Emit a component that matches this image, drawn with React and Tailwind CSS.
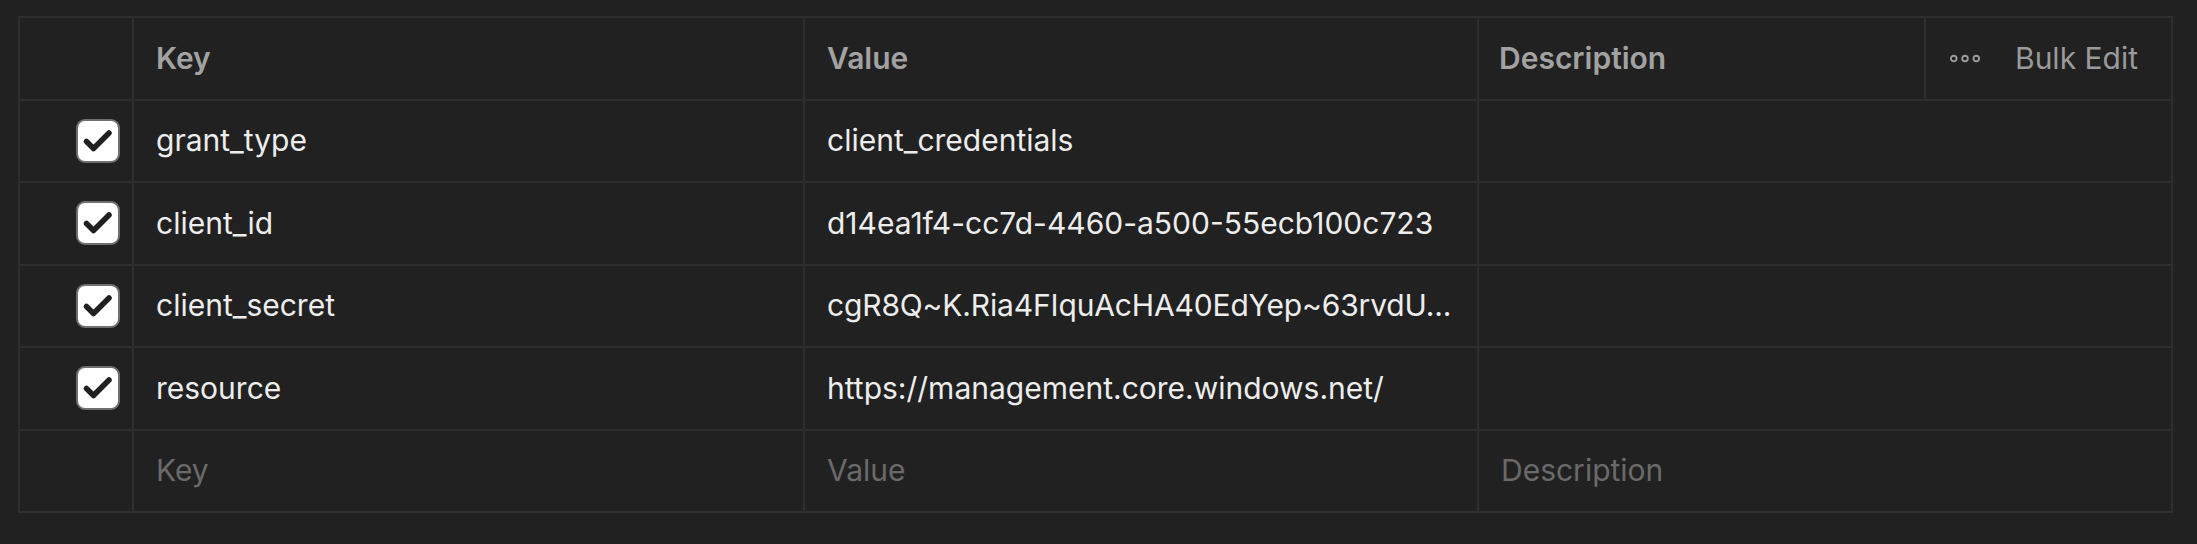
import React from 'react'

const ROWS = [
  { key: 'grant_type',    value: 'client_credentials' },
  { key: 'client_id',     value: 'd14ea1f4-cc7d-4460-a500-55ecb100c723' },
  { key: 'client_secret', value: 'cgR8Q~K.Ria4FIquAcHA40EdYep~63rvdU...', tight: true },
  { key: 'resource',      value: 'https://management.core.windows.net/' },
]

function Check() {
  return (
    <span className="w-[44px] h-[44px] rounded-[9px] bg-white border-2 border-[#6f6f6f] flex items-center justify-center">
      <svg width="40" height="40" viewBox="2 2 40 40" fill="none">
        <path d="M10.5 22.5 L17.5 29.5 L33 14" stroke="#202020" strokeWidth="5.5" strokeLinecap="round" strokeLinejoin="round" />
      </svg>
    </span>
  )
}

function Dots() {
  return (
    <svg width="30" height="9" viewBox="0 0 30 9" fill="none">
      <circle cx="3.75" cy="4.5" r="2.8" stroke="#9a9a9a" strokeWidth="1.9" />
      <circle cx="15" cy="4.5" r="2.8" stroke="#9a9a9a" strokeWidth="1.9" />
      <circle cx="26.25" cy="4.5" r="2.8" stroke="#9a9a9a" strokeWidth="1.9" />
    </svg>
  )
}

const rowCls = 'grid grid-cols-[114px_671px_674px_1fr] h-[82.5px] border-b-2 border-[#2e2e2e]'
const cell = 'flex items-center px-[22px] border-r-2 border-[#2e2e2e] min-w-0'

export default function App() {
  return (
    <div className="min-h-[544px] bg-[#212121] pt-[16px] pl-[18px] pr-[24px] font-['Inter',sans-serif] text-[30px]">
      <div className="border-2 border-b-0 border-[#2e2e2e]">
        {/* header */}
        <div className={rowCls}>
          <div className="border-r-2 border-[#2e2e2e]" />
          <div className={`${cell} font-semibold text-[#a2a2a2]`}>Key</div>
          <div className={`${cell} font-semibold text-[#a2a2a2]`}>Value</div>
          <div className="flex items-stretch min-w-0">
            <div className="flex-1 flex items-center px-[20px] font-semibold text-[#a2a2a2]">Description</div>
            <div className="w-[247px] flex items-center pl-[24px] border-l-2 border-[#2e2e2e] text-[#9a9a9a]">
              <Dots />
              <span className="ml-[35px]">Bulk Edit</span>
            </div>
          </div>
        </div>

        {ROWS.map(r => (
          <div key={r.key} className={rowCls}>
            <div className="flex items-center justify-end pr-[12px] border-r-2 border-[#2e2e2e]">
              <Check />
            </div>
            <div className={`${cell} text-[#ededed]`}>
              <span className="whitespace-nowrap">{r.key}</span>
            </div>
            <div className={`${cell} text-[#ededed]`}>
              <span className={r.tight ? 'whitespace-nowrap tracking-[-0.15px]' : 'whitespace-nowrap'}>{r.value}</span>
            </div>
            <div className="flex items-center px-[22px]" />
          </div>
        ))}

        {/* empty row for new param */}
        <div className={rowCls}>
          <div className="border-r-2 border-[#2e2e2e]" />
          <div className={`${cell} text-[#6a6a6a]`}>Key</div>
          <div className={`${cell} text-[#6a6a6a]`}>Value</div>
          <div className="flex items-center px-[22px] text-[#6a6a6a]">Description</div>
        </div>
      </div>
    </div>
  )
}
